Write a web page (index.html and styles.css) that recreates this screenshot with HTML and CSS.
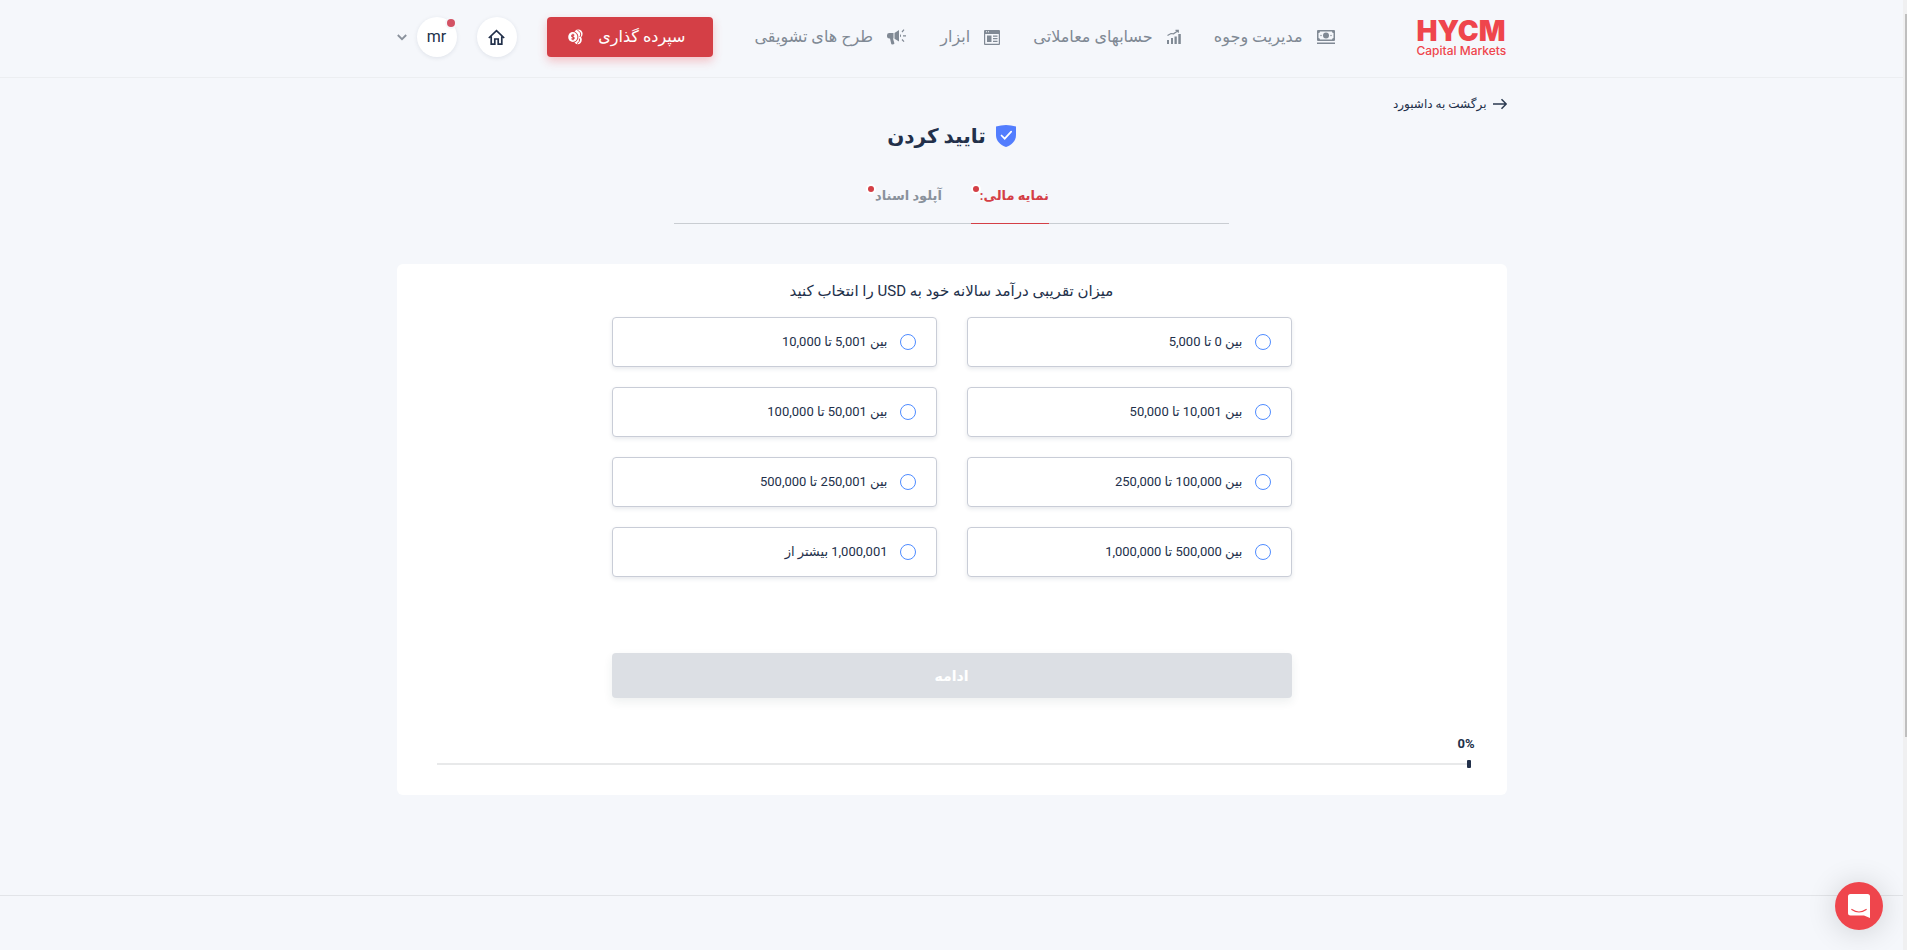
FILE: index.html
```html
<!DOCTYPE html>
<html lang="fa" dir="rtl">
<head>
<meta charset="utf-8">
<meta name="viewport" content="width=device-width, initial-scale=1">
<title>تایید کردن</title>
<link rel="stylesheet" href="styles.css">
</head>
<body>
<header class="header">
  <div class="container header-row">
    <a class="logo" href="#" dir="ltr"><span class="logo-name">HYCM</span><span class="logo-tag">Capital Markets</span></a>
    <nav class="nav">
      <a class="nav-link" href="#">
        <svg class="nav-icon" viewBox="0 0 18 16"><path fill="currentColor" fill-rule="evenodd" d="M1 1h16a1 1 0 0 1 1 1v9a1 1 0 0 1-1 1H1a1 1 0 0 1-1-1V2a1 1 0 0 1 1-1Zm2 1.500A1.500 1.500 0 0 1 1.500 4v5A1.500 1.500 0 0 1 3 10.500h12A1.500 1.500 0 0 1 16.500 9V4A1.500 1.500 0 0 1 15 2.500Z"/><circle cx="9" cy="6.500" r="3" fill="currentColor"/><circle cx="4" cy="6.500" r=".7" fill="currentColor"/><circle cx="14" cy="6.500" r=".7" fill="currentColor"/><path fill="currentColor" d="M0 13.500h18V15H0z"/></svg>
        <span>مدیریت وجوه</span></a>
      <a class="nav-link" href="#">
        <svg class="nav-icon nav-icon-small" viewBox="0 0 14 16"><path fill="currentColor" d="M0 11h2v4H0zM4 9h2v6H4zM7.500 7.500h2.300V15H7.500zM11.300 5h2.500v10h-2.500z"/><path fill="none" stroke="currentColor" stroke-width="1.200" d="M.5 6.500 4 4.500l2.500.3L11 1.800M8.500 1.300h2.800v2.500"/></svg>
        <span>حسابهای معاملاتی</span></a>
      <a class="nav-link" href="#">
        <svg class="nav-icon nav-icon-mid" viewBox="0 0 16 16"><path fill="currentColor" fill-rule="evenodd" d="M1 1h14a1 1 0 0 1 1 1v13a1 1 0 0 1-1 1H1a1 1 0 0 1-1-1V2a1 1 0 0 1 1-1Zm.2 4v9.800h13.600V5ZM2 2.300v1h1v-1Zm2 0v1h1v-1Z"/><path fill="currentColor" d="M3 6.500h4.500V13H3zM9 6.500h4.500v1.200H9zM9 9h4.500v1.200H9zM9 11.700h4.500V13H9z"/></svg>
        <span>ابزار</span></a>
      <a class="nav-link" href="#">
        <svg class="nav-icon nav-icon-wide" viewBox="0 0 20 16"><path fill="currentColor" d="M12 1v11.500L7.500 9.800V4ZM6.500 4v5.500H6l1.300 4.600a1 1 0 0 1-.8 1.200l-1.200.2a1 1 0 0 1-1.100-.8L3 9.400H2.300A2.300 2.300 0 0 1 0 7V6.300A2.300 2.300 0 0 1 2.300 4ZM13 5.200a1.600 1.600 0 0 1 0 3Z"/><path stroke="currentColor" stroke-width="1.200" d="M16 6.800h3M15 3l2-2.300M15 10.500l2 2.200"/></svg>
        <span>طرح های تشویقی</span></a>
    </nav>
    <div class="actions">
      <button class="deposit" type="button"><span>سپرده گذاری</span>
        <svg class="deposit-icon" viewBox="0 0 15 16"><ellipse cx="9.800" cy="10.800" rx="4" ry="4.500" fill="#fff"/><ellipse cx="10.300" cy="4.800" rx="4.300" ry="4.400" fill="#fff"/><path fill="none" stroke="#d43f46" d="M9.500 1.500c3 .8 4 4 2.300 6.500M9 14.500c2-.8 3-3 2.300-5"/><ellipse cx="5" cy="8" rx="5.400" ry="5.800" fill="#d43f46"/><ellipse cx="4.800" cy="8" rx="4.600" ry="5" fill="#fff"/><path fill="none" stroke="#d43f46" stroke-width="1.100" d="M6.300 6.300C5.500 5.400 3.600 5.700 3.600 7c0 1.300 2.700.7 2.700 2.100 0 1.200-2 1.500-2.900.5M5 4.700v6.500"/></svg>
      </button>
      <a class="circle" href="#" aria-label="خانه"><svg class="home-icon" viewBox="0 0 17 17"><path fill="none" stroke="#22304a" stroke-width="1.700" d="m.8 9 7.700-7.300L16.200 9M3.200 7.500v7.700h3.600V10h3.400v5.200h3.600V7.500"/></svg></a>
      <button class="user" type="button"><span class="circle" dir="ltr">mr<span class="circle-dot"></span></span>
        <svg class="chevron" viewBox="0 0 10 7"><path fill="none" stroke="#8a919c" stroke-width="1.800" d="m.8 1 4.200 4.200L9.200 1"/></svg></button>
    </div>
  </div>
</header>
<main class="container main">
  <a class="back" href="#"><svg class="back-icon" viewBox="0 0 14 12"><path fill="none" stroke="#2b3a50" stroke-width="1.500" stroke-linejoin="round" d="M0 6h13M8.500 1.200 13.200 6l-4.700 4.800"/></svg><span>برگشت به داشبورد</span></a>
  <h1 class="title"><svg class="shield" viewBox="0 0 20 22"><path fill="#527dfe" d="M0 1.500Q10-1.500 20 1.500V10c0 6-4.500 10-10 12C4.500 20 0 16 0 10Z"/><path fill="none" stroke="#fff" stroke-width="1.700" stroke-linecap="round" d="m5.500 10.500 3.200 3.200 6.500-7"/></svg><span>تایید کردن</span></h1>
  <nav class="tabs">
    <a class="tab tab-active" href="#">نمایه مالی:<span class="tab-dot"></span></a>
    <a class="tab" href="#">آپلود اسناد<span class="tab-dot"></span></a>
  </nav>
  <form class="card">
    <fieldset class="question">
      <legend class="question-text">میزان تقریبی درآمد سالانه خود به USD را انتخاب کنید</legend>
      <div class="options">
        <label class="option"><input class="radio" type="radio" name="income"><span>بین 0 تا 5,000</span></label>
        <label class="option"><input class="radio" type="radio" name="income"><span>بین 5,001 تا 10,000</span></label>
        <label class="option"><input class="radio" type="radio" name="income"><span>بین 10,001 تا 50,000</span></label>
        <label class="option"><input class="radio" type="radio" name="income"><span>بین 50,001 تا 100,000</span></label>
        <label class="option"><input class="radio" type="radio" name="income"><span>بین 100,000 تا 250,000</span></label>
        <label class="option"><input class="radio" type="radio" name="income"><span>بین 250,001 تا 500,000</span></label>
        <label class="option"><input class="radio" type="radio" name="income"><span>بین 500,000 تا 1,000,000</span></label>
        <label class="option"><input class="radio" type="radio" name="income"><span>1,000,001 بیشتر از</span></label>
      </div>
    </fieldset>
    <button class="continue" type="button" disabled>ادامه</button>
    <div class="progress" role="progressbar" aria-valuenow="0" aria-valuemin="0" aria-valuemax="100">
      <span class="progress-value" dir="ltr">0%</span>
      <div class="progress-row"><span class="progress-mark"></span><span class="progress-line"></span></div>
    </div>
  </form>
</main>
<footer class="footer"></footer>
<button class="chat" type="button" aria-label="گفتگو"><svg class="chat-icon" viewBox="0 0 22 24"><path fill="#fff" d="M2.500 0h17A2.500 2.500 0 0 1 22 2.500V24l-6-2.500H2.500A2.500 2.500 0 0 1 0 19V2.500A2.500 2.500 0 0 1 2.500 0Z"/><path fill="none" stroke="#ef454c" stroke-width="1.200" stroke-linecap="round" d="M3.800 15.500q7.200 5 14.400 0"/></svg></button>
<div class="scroll-track"><div class="scroll-thumb"></div></div>
</body>
</html>
```
FILE: styles.css
```css
* { box-sizing: border-box; }
html { height: 100%; }
body {
  margin: 0;
  min-height: 100%;
  padding-right: 4px;
  display: flex;
  flex-direction: column;
  overflow: hidden;
  background: #f5f7fb;
  color: #22304a;
  font: 13px/20px Roboto, "DejaVu Sans", sans-serif;
}
a { color: inherit; text-decoration: none; }
button { font: inherit; border: 0; cursor: pointer; }
svg { display: block; flex: none; }

.container { width: 100%; max-width: 1110px; margin: 0 auto; }
.header { border-bottom: 1px solid #eceef1; padding: 17px 0 20px; }
.header-row { display: flex; align-items: center; height: 40px; }
.logo { display: flex; flex-direction: column; width: 90px; color: #ef454c; }
.logo-name { font: 900 28px/28px Inter, sans-serif; }
.logo-tag { font: 500 12px/12px Inter, sans-serif; white-space: nowrap; }
.nav { display: flex; flex: 1; justify-content: space-between; margin-inline: 82px 42px; }
.nav-link { display: flex; align-items: center; gap: 14px; color: #808994; font-size: 16px; white-space: nowrap; }
.nav-icon { width: 18px; height: 16px; }
.nav-icon-small { width: 14px; }
.nav-icon-mid { width: 16px; }
.nav-icon-wide { width: 20px; }
.actions { display: flex; align-items: center; }
.deposit {
  display: flex; align-items: center; justify-content: space-between;
  width: 166px; height: 40px; padding: 0 27px 0 21px;
  border-radius: 4px; background: #d43f46; color: #fff; font-size: 16px;
  box-shadow: 0 4px 10px rgba(239, 69, 76, .3);
}
.deposit-icon { width: 15px; height: 16px; }
.circle {
  position: relative; display: flex; align-items: center; justify-content: center;
  width: 40px; height: 40px; border-radius: 50%; background: #fff;
  box-shadow: 0 1px 4px rgba(34, 48, 74, .1); color: #22304a; font-size: 16px;
}
.actions > .circle { margin: 0 30px 0 20px; }
.home-icon { width: 17px; height: 17px; }
.circle-dot { position: absolute; top: 2px; right: 2px; width: 8px; height: 8px; border-radius: 50%; background: #d35264; box-shadow: 0 0 0 2px #f5f7fb; }
.user { display: flex; align-items: center; gap: 10px; padding: 0; background: none; }
.chevron { width: 10px; height: 7px; }

.main { display: flex; flex-direction: column; align-items: center; }
.back { align-self: flex-start; display: flex; align-items: center; gap: 6px; margin-top: 16px; font-size: 12px; }
.back-icon { width: 14px; height: 12px; }
.title { display: flex; align-items: center; gap: 10px; margin: 6px 0 0; font-size: 20px; line-height: 32px; font-weight: 700; }
.shield { width: 20px; height: 22px; }
.tabs { display: flex; justify-content: center; gap: 29px; width: 50%; margin-top: 34px; padding-left: 12px; border-bottom: 1px solid #c9cdd2; }
.tab { display: flex; gap: 1px; margin-bottom: -1px; padding-bottom: 17px; border-bottom: 1px solid transparent; color: #8a929c; font-size: 13px; font-weight: 700; }
.tab-active { border-color: #d43f46; color: #d43f46; }
.tab-dot { width: 6px; height: 6px; margin: 0 0 0 2px; border-radius: 50%; background: #d43f46; box-shadow: 0 0 0 2px #fff; }

.card { display: flex; flex-direction: column; align-items: center; width: 100%; margin-top: 40px; padding: 15px 30px 27px; border-radius: 6px; background: #fff; }
.question { width: 100%; max-width: 680px; margin: 0; padding: 0; border: 0; }
.question-text { margin: 0 auto; padding: 0; font-size: 15px; line-height: 24px; }
.options { display: grid; grid-template-columns: 1fr 1fr; gap: 20px 30px; margin-top: 14px; }
.option { display: flex; align-items: center; gap: 12px; height: 50px; padding: 0 20px; border: 1px solid #c9cdd7; border-radius: 4px; background: #fff; box-shadow: 0 2px 4px rgba(34, 48, 74, .1); font-size: 13px; }
.radio { appearance: none; width: 16px; height: 16px; margin: 0; border: 1px solid #4f8cff; border-radius: 50%; background: #fff; }
.continue { width: 100%; max-width: 680px; height: 45px; margin-top: 76px; border-radius: 4px; background: #dcdfe4; color: #fff; font-size: 14px; font-weight: 700; box-shadow: 0 4px 10px rgba(34, 60, 60, .08); }
.progress { align-self: stretch; margin-top: 36px; padding: 0 2px 0 10px; }
.progress-value { display: block; width: max-content; font-weight: 700; }
.progress-row { display: flex; align-items: center; margin-top: 6px; padding-right: 4px; }
.progress-mark { width: 4px; height: 8px; border-radius: 1px; background: #22304a; }
.progress-line { flex: 1; height: 2px; background: #e8e9ea; }
.footer { margin-top: 100px; border-top: 1px solid #e2e4e8; min-height: 55px; }
.chat { position: fixed; right: 24px; bottom: 20px; display: flex; align-items: center; justify-content: center; width: 48px; height: 48px; padding: 0; border-radius: 50%; background: #ef454c; box-shadow: 0 2px 30px rgba(0, 0, 0, .16); }
.chat-icon { width: 22px; height: 24px; }
.scroll-track { position: fixed; top: 0; bottom: 0; right: 0; width: 4px; background: #f0f0f1; }
.scroll-thumb { width: 2px; height: 723px; margin-top: 14px; background: #bfbfbf; }
```
